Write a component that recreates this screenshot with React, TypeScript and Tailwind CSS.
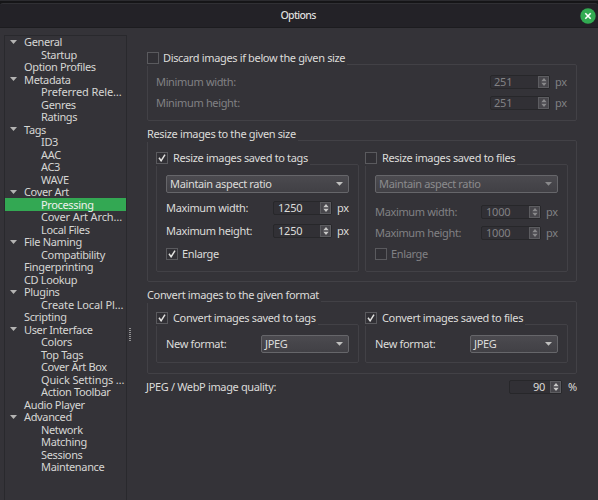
import type { ReactNode } from 'react';
import { clsx } from 'clsx';

interface TreeItem {
  label: string;
  level: 0 | 1;
  open?: boolean;
  selected?: boolean;
}

const treeItems: TreeItem[] = [
  { label: 'General', level: 0, open: true },
  { label: 'Startup', level: 1 },
  { label: 'Option Profiles', level: 0 },
  { label: 'Metadata', level: 0, open: true },
  { label: 'Preferred Rele…', level: 1 },
  { label: 'Genres', level: 1 },
  { label: 'Ratings', level: 1 },
  { label: 'Tags', level: 0, open: true },
  { label: 'ID3', level: 1 },
  { label: 'AAC', level: 1 },
  { label: 'AC3', level: 1 },
  { label: 'WAVE', level: 1 },
  { label: 'Cover Art', level: 0, open: true },
  { label: 'Processing', level: 1, selected: true },
  { label: 'Cover Art Arch…', level: 1 },
  { label: 'Local Files', level: 1 },
  { label: 'File Naming', level: 0, open: true },
  { label: 'Compatibility', level: 1 },
  { label: 'Fingerprinting', level: 0 },
  { label: 'CD Lookup', level: 0 },
  { label: 'Plugins', level: 0, open: true },
  { label: 'Create Local Pl…', level: 1 },
  { label: 'Scripting', level: 0 },
  { label: 'User Interface', level: 0, open: true },
  { label: 'Colors', level: 1 },
  { label: 'Top Tags', level: 1 },
  { label: 'Cover Art Box', level: 1 },
  { label: 'Quick Settings …', level: 1 },
  { label: 'Action Toolbar', level: 1 },
  { label: 'Audio Player', level: 0 },
  { label: 'Advanced', level: 0, open: true },
  { label: 'Network', level: 1 },
  { label: 'Matching', level: 1 },
  { label: 'Sessions', level: 1 },
  { label: 'Maintenance', level: 1 },
];

function TitleBar() {
  return (
    <div className="shrink-0 border-t border-t-[#2b2b2f] bg-[#151517] pt-[2px]">
      <header className="flex h-[25px] items-center rounded-t-[3px] border-t border-b border-t-[#303034] border-b-[#1c1c1f] bg-[#232227] pr-[2px]">
        <h1 className="flex-1 pl-[16px] text-center text-[10.6px] leading-none font-medium tracking-[-0.7px] text-[#dededc]">Options</h1>
        <button aria-label="Close">
          <svg className="h-4 w-4" viewBox="0 0 16 16">
            <circle cx="8" cy="8" r="7.7" fill="#32ab52" />
            <path d="M5.3 5.3l5.4 5.4M10.7 5.3l-5.4 5.4" stroke="#fff" strokeWidth="1.6" />
          </svg>
        </button>
      </header>
    </div>
  );
}

function Tree() {
  return (
    <nav className="w-[123px] shrink-0 border border-b-0 border-[#29292d] bg-[#343338]">
      {treeItems.map((item) => (
        <div
          key={item.label}
          className={clsx(
            'flex h-[12.5px] items-center whitespace-nowrap',
            item.selected ? 'bg-[#33a853] text-[#f0f0ee]' : 'text-[#d6d6d4]',
            item.label.endsWith('…') && 'tracking-[-0.14px]'
          )}
        >
          <span className={clsx('flex shrink-0 pl-[5px]', item.level === 0 ? 'w-[19px]' : 'w-[36px]')}>
            {item.open && (
              <svg className="h-[4px] w-[7px]" viewBox="0 0 7 4">
                <path d="M0 0h7L3.5 4z" fill="#b4b4b3" />
              </svg>
            )}
          </span>
          {item.label}
        </div>
      ))}
    </nav>
  );
}

function SplitterGrip() {
  return (
    <div className="flex w-[5px] shrink-0 flex-col items-center gap-px pt-[293px]">
      {[0, 1, 2, 3, 4, 5, 6].map((i) => (
        <span key={i} className="h-px w-[2px] bg-[#929294]" />
      ))}
    </div>
  );
}

interface CheckProps {
  label: string;
  checked?: boolean;
  disabled?: boolean;
  tight?: boolean;
}

function Check({ label, checked, disabled, tight }: CheckProps) {
  return (
    <label className={clsx('flex h-[14px] items-center', tight ? 'gap-[4px]' : 'gap-[5px]', disabled && 'text-[#818184]')}>
      <span className="flex h-[12px] w-[12px] shrink-0 items-center justify-center border border-[#5a5a5e] bg-[#313035]">
        {checked && (
          <svg className="h-[8px] w-[8px]" viewBox="0 0 8 8">
            <path d="M1 3.8L3.1 6.8L7 .6" fill="none" stroke="#e2e2e0" strokeWidth="1.5" />
          </svg>
        )}
      </span>
      {label}
    </label>
  );
}

function SpinBox({ value, disabled, className }: { value: string; disabled?: boolean; className?: string }) {
  return (
    <div className={clsx('flex h-[14px] shrink-0 rounded-[2px] border border-[#27272a] bg-[#313035]', disabled && 'text-[#818184]', className)}>
      <span className="flex flex-1 items-center tracking-[-0.2px]">{value}</span>
      <span className="flex w-[11px] items-center justify-center border border-[#5c5c60] bg-[#48474c]">
        <svg className="h-[8px] w-[6px]" viewBox="0 0 6 8" fill={disabled ? '#89898b' : '#c8c8c7'}>
          <path d="M.3 3.2L3 0l2.7 3.2zM.3 4.8L3 8l2.7-3.2z" />
        </svg>
      </span>
    </div>
  );
}

function Combo({ value, disabled, className }: { value: string; disabled?: boolean; className?: string }) {
  return (
    <button
      className={clsx(
        'flex h-[18px] items-center justify-between rounded-[2px] border border-[#66666a] bg-linear-to-b from-[#4b4a4f] to-[#414045] pr-[5px] pl-[3px]',
        disabled && 'text-[#8b8b8d]',
        className
      )}
    >
      {value}
      <svg className="h-[4px] w-[7px]" viewBox="0 0 7 4">
        <path d="M0 0h7L3.5 3.8z" fill={disabled ? '#89898b' : '#c0c0bf'} />
      </svg>
    </button>
  );
}

interface GroupProps {
  title: ReactNode;
  className?: string;
  children: ReactNode;
}

// The title covers the start of the frame's top line
function Group({ title, className, children }: GroupProps) {
  return (
    <section className="flex flex-col">
      <div className="relative z-10 -mb-[2px] flex h-[16px] w-fit items-center bg-[#343338] pr-[2px]">{title}</div>
      <div className={clsx('rounded-[2px] border border-[#424146]', className)}>{children}</div>
    </section>
  );
}

interface SizeRowProps {
  label: string;
  value: string;
  disabled?: boolean;
  spinClass?: string;
}

function SizeRow({ label, value, disabled, spinClass }: SizeRowProps) {
  return (
    <div className={clsx('flex h-[14px] items-center', disabled && 'text-[#818184]')}>
      <span className="flex-1">{label}</span>
      <SpinBox value={value} disabled={disabled} className={spinClass} />
      <span className="w-[17px] pl-[5px]">px</span>
    </div>
  );
}

export default function App() {
  return (
    <div className="flex h-[500px] w-[598px] flex-col overflow-hidden bg-[#343338] font-['Noto_Sans',sans-serif] text-[11px] leading-none tracking-[-0.35px] text-[#dcdcda]">
      <TitleBar />
      <div className="flex min-h-0 flex-1 pt-[6.5px] pl-[4px]">
        <Tree />
        <SplitterGrip />
        <main className="flex flex-1 flex-col pt-[15.5px] pr-[21px] pl-[15px] leading-[12px]">
          <Group title={<Check label="Discard images if below the given size" tight />} className="flex h-[57px] flex-col gap-[7px] pt-[10px] pr-[9px] pl-[8px]">
            <SizeRow label="Minimum width:" value="251" disabled spinClass="w-[60px] pl-[3px]" />
            <SizeRow label="Minimum height:" value="251" disabled spinClass="w-[60px] pl-[3px]" />
          </Group>

          <div className="mt-[5px]">
            <Group title="Resize images to the given size" className="flex h-[142px] gap-[6px] pt-[9px] pl-[8px]">
              <Group title={<Check label="Resize images saved to tags" checked />} className="flex h-[108px] w-[203px] flex-col px-[9px] pt-[10px]">
                <Combo value="Maintain aspect ratio" className="mb-[8px]" />
                <SizeRow label="Maximum width:" value="1250" spinClass="w-[59px] pl-[4px]" />
                <div className="h-[9px]" />
                <SizeRow label="Maximum height:" value="1250" spinClass="w-[59px] pl-[4px]" />
                <div className="mt-[9px]">
                  <Check label="Enlarge" checked tight />
                </div>
              </Group>
              <Group title={<Check label="Resize images saved to files" />} className="flex h-[108px] w-[203px] flex-col px-[9px] pt-[10px]">
                <Combo value="Maintain aspect ratio" disabled className="mb-[12px]" />
                <SizeRow label="Maximum width:" value="1000" disabled spinClass="w-[60px] pl-[4px]" />
                <div className="h-[7px]" />
                <SizeRow label="Maximum height:" value="1000" disabled spinClass="w-[60px] pl-[4px]" />
                <div className="mt-[7px]">
                  <Check label="Enlarge" disabled tight />
                </div>
              </Group>
            </Group>
          </div>

          <div className="mt-[5px]">
            <Group title="Convert images to the given format" className="flex h-[73px] gap-[6px] pt-[8px] pl-[8px]">
              <Group title={<Check label="Convert images saved to tags" checked />} className="flex h-[39px] w-[203px] items-start justify-between px-[9px] pt-[10px]">
                <span className="flex h-[18px] items-center">New format:</span>
                <Combo value="JPEG" className="w-[88px]" />
              </Group>
              <Group title={<Check label="Convert images saved to files" checked />} className="flex h-[39px] w-[203px] items-start justify-between px-[9px] pt-[10px]">
                <span className="flex h-[18px] items-center">New format:</span>
                <Combo value="JPEG" className="w-[88px]" />
              </Group>
            </Group>
          </div>

          <div className="-ml-px mt-[6px] flex h-[14px] items-center">
            <span className="flex-1">JPEG / WebP image quality:</span>
            <SpinBox value="90" className="w-[53px] pl-[23px]" />
            <span className="w-[15px] pl-[6px]">%</span>
          </div>
        </main>
      </div>
    </div>
  );
}
